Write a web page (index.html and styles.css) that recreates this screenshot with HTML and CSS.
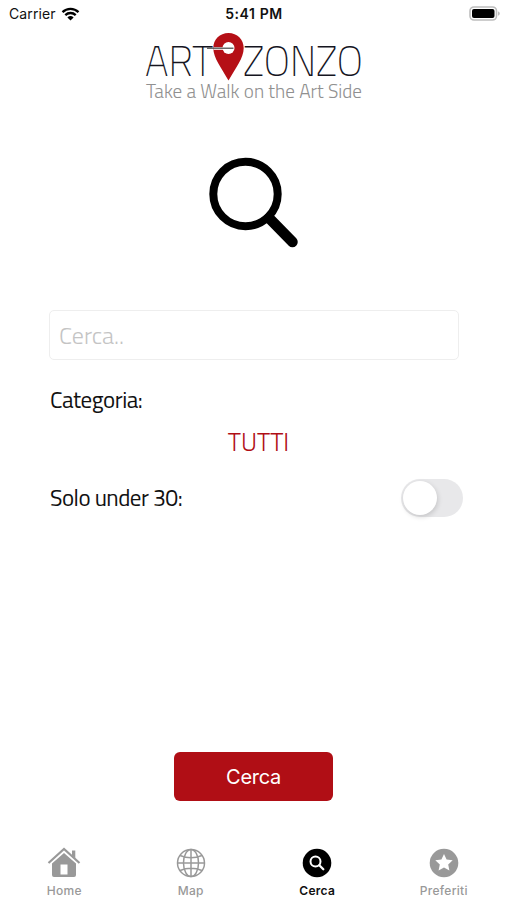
FILE: index.html
```html
<!DOCTYPE html>
<html lang="it">
<head>
    <meta charset="UTF-8">
    <meta name="viewport" content="width=device-width, initial-scale=1.0">
    <title>Art Zonzo</title>
    <link rel="stylesheet" href="styles.css">
</head>
<body>
    <header class="status-bar">
        <div class="carrier">
            <span>Carrier</span>
            <svg class="wifi" width="19" height="14" viewBox="0 0 19 14">
                <path d="M1.5 5.2a11.5 11.5 0 0 1 16 0M4.3 8.1a7.5 7.5 0 0 1 10.4 0" fill="none" stroke="#000" stroke-width="2.3"/>
                <path d="M9.5 13.6 6.4 10.4a4.5 4.5 0 0 1 6.2 0z"/>
            </svg>
        </div>
        <div class="time">5:41 PM</div>
        <svg class="battery" width="32" height="16" viewBox="0 0 32 16">
            <rect x="2" y="1" width="26.5" height="13" rx="4" fill="#fff" stroke="#bdbdbd" stroke-width="1.6"/>
            <rect x="4" y="3" width="22.5" height="9" rx="2"/>
            <path d="M30 5.5c2.4.7 2.4 3.4 0 4.2z" fill="#bdbdbd"/>
        </svg>
    </header>

    <main class="content">
        <svg class="logo" width="220" height="72" viewBox="0 0 220 72">
            <g class="logo-name">
                <text x="0" y="45" textLength="68" lengthAdjust="spacingAndGlyphs">ART</text>
                <text x="98" y="45" textLength="120" lengthAdjust="spacingAndGlyphs">ZONZO</text>
            </g>
            <path d="M83.500 2c8.700 0 15.200 6.600 15.200 15 0 10-8 20-15.200 32.500C76.500 37 68.300 27 68.300 17 68.300 8.600 74.800 2 83.500 2z" fill="#b50f16"/>
            <circle cx="83.500" cy="17" r="6" fill="#fff"/>
            <path d="M68.500 17.500h20" stroke="#fff" stroke-width="2.600"/>
            <path d="M62 17.200h26.500" stroke="#444" stroke-width="1.200"/>
            <text class="tagline" x="1" y="67" textLength="216" lengthAdjust="spacingAndGlyphs">Take a Walk on the Art Side</text>
        </svg>

        <svg class="search-icon" width="92" height="94" viewBox="0 0 92 94">
            <circle cx="37.500" cy="39" r="32.200" fill="none" stroke="#000" stroke-width="8"/>
            <path d="M61 63 84.500 87" stroke="#000" stroke-width="10.500" stroke-linecap="round"/>
        </svg>

        <form class="search-form">
            <div class="search-field"><span class="label placeholder">Cerca..</span></div>
            <div class="row"><span class="label">Categoria:</span></div>
            <div class="row selected"><span class="label">TUTTI</span></div>
            <div class="row toggle-row">
                <span class="label">Solo under 30:</span>
                <span class="switch"><span class="knob"></span></span>
            </div>
            <button type="button">Cerca</button>
        </form>
    </main>

    <nav class="tab-bar">
        <a class="tab">
            <svg width="34" height="32" viewBox="0 0 34 32">
                <path d="M1.500 17 17 3l15.500 14" fill="none" stroke="#999" stroke-width="2.200"/>
                <path d="M25 4.500h3.300v8L25 9.500zM5 17.500 17 7l12 10.500V29q0 2-2 2H7q-2 0-2-2zM13.500 18.500v10h7v-10z" fill="#999" fill-rule="evenodd"/>
            </svg>
            <span>Home</span>
        </a>
        <a class="tab">
            <svg width="34" height="32" viewBox="0 0 34 32">
                <g fill="none" stroke="#999" stroke-width="1.500">
                    <circle cx="17" cy="17" r="13.500"/>
                    <ellipse cx="17" cy="17" rx="7.500" ry="13.500"/>
                    <path d="M17 3.500v27M3.500 17h27M6 9.500q11 4.500 22 0M6 24.500q11-4.500 22 0"/>
                </g>
            </svg>
            <span>Map</span>
        </a>
        <a class="tab active">
            <svg width="34" height="32" viewBox="0 0 34 32">
                <circle cx="17" cy="17" r="14.300"/>
                <circle cx="15.500" cy="15.500" r="5" fill="none" stroke="#fff" stroke-width="2"/>
                <path d="m19.300 19.300 4 4" stroke="#fff" stroke-width="2.300" stroke-linecap="round"/>
            </svg>
            <span>Cerca</span>
        </a>
        <a class="tab">
            <svg width="34" height="32" viewBox="0 0 34 32">
                <circle cx="17" cy="17" r="14.300" fill="#999"/>
                <path d="m17 8 2.600 5.600 6.100.700-4.500 4.200 1.200 6-5.400-3-5.400 3 1.200-6-4.500-4.200 6.100-.700z" fill="#fff"/>
            </svg>
            <span>Preferiti</span>
        </a>
    </nav>
</body>
</html>
```

FILE: styles.css
```css
:root {
    --primary: #b00e15;
    --muted: #999;
}

* {
    margin: 0;
    padding: 0;
    box-sizing: border-box;
}

body {
    height: 100vh;
    background: #fff;
    display: flex;
    flex-direction: column;
    overflow: hidden;
    color: #111;
    font-family: Inter, "Liberation Sans", sans-serif;
}

.status-bar {
    height: 28px;
    padding: 0 7px 0 9px;
    display: grid;
    grid-template-columns: 1fr auto 1fr;
    align-items: center;
    font-size: 14px;
}

.carrier {
    display: flex;
    align-items: center;
    gap: 5px;
    letter-spacing: 0.1px;
}

.wifi {
    margin-top: -1px;
}

.carrier span,
.time {
    margin-top: -1px;
}

.time {
    margin-right: 1px;
    font-size: 14px;
    font-weight: 600;
    letter-spacing: 0.6px;
}

.battery {
    justify-self: end;
}

.content {
    flex: 1;
    display: flex;
    flex-direction: column;
    align-items: center;
}

.logo {
    margin: 3px 0 0 3px;
    overflow: visible;
}

.logo-name {
    font: 200 42px "Titillium Web", Roboto, sans-serif;
    fill: #15151f;
}

.tagline {
    font: 300 19px "Titillium Web", Roboto, sans-serif;
    fill: #909090;
}

.search-icon {
    margin: 52px 0 0 1px;
}

.search-form {
    width: 100%;
    margin-top: 61px;
    padding: 0 44px 0 49px;
    display: flex;
    flex-direction: column;
}

.search-field {
    height: 50px;
    width: 410px;
    padding-left: 9px;
    display: flex;
    align-items: center;
    border: 1.5px solid #eee;
    border-radius: 5px;
}

.row {
    height: 42px;
    padding-left: 1px;
    display: flex;
    align-items: center;
}

.label {
    font: 400 23px/30px "Titillium Web", Roboto, sans-serif;
    letter-spacing: -0.5px;
}

.placeholder {
    color: #c4c4c4;
    font-size: 24px;
    font-weight: 300;
    letter-spacing: 0;
}

.search-field + .row {
    margin-top: 19px;
}

.selected {
    justify-content: center;
    padding-left: 5px;
    color: var(--primary);
}

.selected .label {
    font-size: 25px;
    font-weight: 300;
    letter-spacing: 0;
}

.toggle-row {
    height: 69px;
    justify-content: space-between;
}

.switch {
    width: 62px;
    height: 38px;
    padding: 2px;
    border-radius: 19px;
    background: #e8e8ea;
}

.knob {
    display: block;
    width: 34px;
    height: 34px;
    border-radius: 50%;
    background: #fff;
    box-shadow: 1px 2px 5px rgba(0, 0, 0, 0.15);
}

button {
    width: 159px;
    height: 49px;
    margin: 220px 0 0 125px;
    border: none;
    border-radius: 6px;
    background: var(--primary);
    color: #fff;
    font: 400 20px Inter, sans-serif;
    letter-spacing: -0.3px;
}

.tab-bar {
    height: 54px;
    padding-left: 1px;
    display: grid;
    grid-template-columns: repeat(4, 1fr);
}

.tab {
    display: flex;
    flex-direction: column;
    align-items: center;
    gap: 5px;
    color: var(--muted);
    font-size: 12px;
    font-weight: 500;
    line-height: 16px;
    letter-spacing: 0.3px;
}

.active {
    color: #111;
    font-weight: 600;
}
```
